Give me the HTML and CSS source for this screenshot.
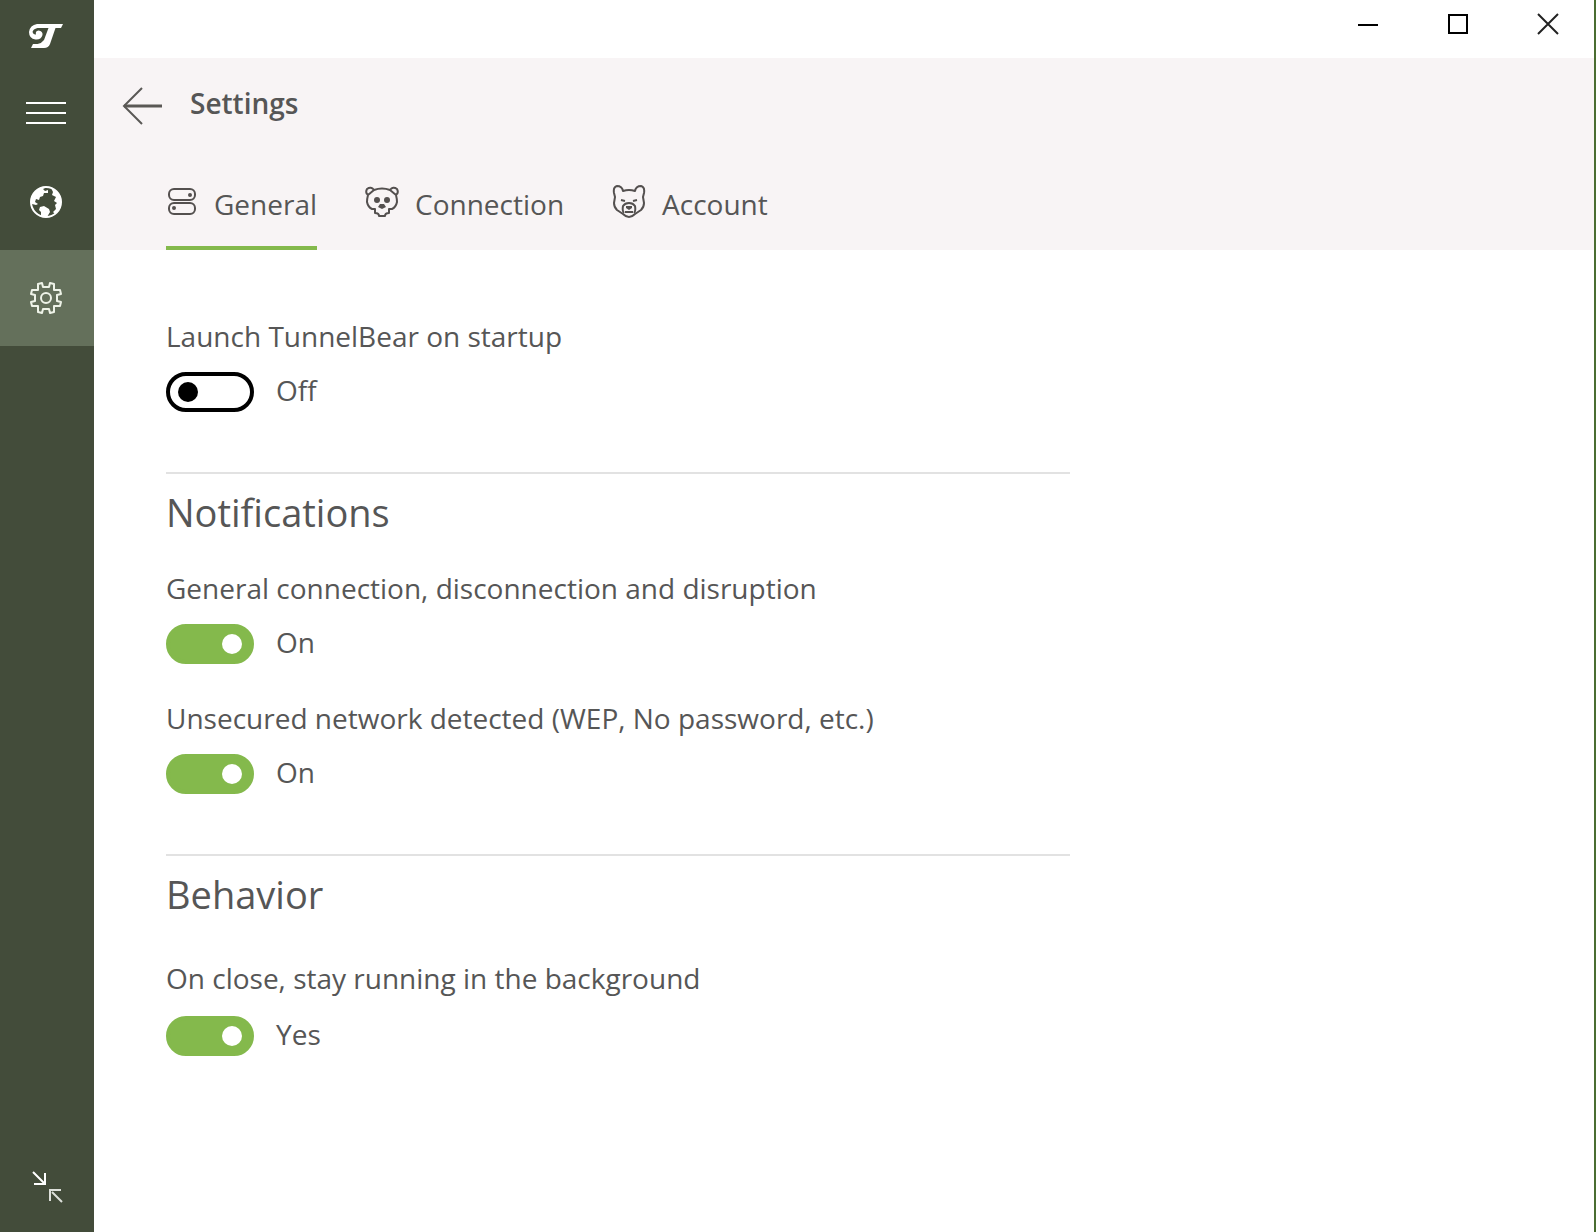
FILE: index.html
```html
<!DOCTYPE html>
<html lang="en">
<head>
<meta charset="utf-8">
<meta name="viewport" content="width=device-width, initial-scale=1">
<title>TunnelBear Settings</title>
<link rel="stylesheet" href="styles.css">
</head>
<body>
<div class="window">
  <nav class="sidebar" aria-label="Main">
    <div class="logo">
      <svg width="36" height="26" viewBox="0 0 36 26" aria-hidden="true">
        <path d="M9 1H35L33 5H27.500L22 21Q20.500 25 16 25H3L5 21H9.500Q14 20 16 17L20.500 5H9.500Q5 6 4.500 9Q5.500 12 8 11.500Q7 8 10.500 7.500Q15 8 14.500 12Q13 17 7.500 16.500Q1 15.500 1 9Q2 2 9 1Z" fill="#fff"/>
      </svg>
    </div>
    <button class="side-item side-menu" type="button" aria-label="Menu">
      <svg width="42" height="24" viewBox="0 0 42 24" aria-hidden="true"><path d="M1 2H41M1 12H41M1 22H41" stroke="#fff" stroke-width="2"/></svg>
    </button>
    <button class="side-item" type="button" aria-label="Map">
      <svg width="34" height="34" viewBox="0 0 34 34" aria-hidden="true">
        <circle cx="17" cy="17" r="15" fill="none" stroke="#fff" stroke-width="2"/>
        <g fill="#fff">
          <path d="M2 16Q3 8 9 4Q13 1 18 2L14 4L16 6L19 5V8L15 8L14 11L11 12L10 15L7 14L6 17L9 19L7 20L3 19Z"/>
          <path d="M11 22L15 21L20 24L21 27L18 32L12 31L12 27L10 25Z"/>
          <path d="M22 3Q32 7 32 17Q31 25 26 29L24 27L27 24L26 20L28 18L25 16L27 12L23 10L24 7Z"/>
        </g>
      </svg>
    </button>
    <button class="side-item side-active" type="button" aria-label="Settings" aria-current="page">
      <svg width="34" height="34" viewBox="0 0 34 34" fill="none" stroke="#eef3e8" stroke-width="2" stroke-linejoin="round" aria-hidden="true">
        <path d="M14 6L13 2L9 3V9H3L2 13L6 14V20L2 21L3 25H9V31L13 32L14 28H20L21 32L25 31V25H31L32 21L28 20V14L32 13L31 9H25V3L21 2L20 6Z"/>
        <circle cx="17" cy="17" r="5"/>
      </svg>
    </button>
    <button class="side-item side-collapse" type="button" aria-label="Compact view">
      <svg width="34" height="36" viewBox="0 0 34 36" fill="none" stroke-width="2" aria-hidden="true">
        <path d="M4 4L15 15M16 5V16H5" stroke="#fff"/><path d="M33 34L23 24M21 33V22H32" stroke="#dde0da"/>
      </svg>
    </button>
  </nav>

  <div class="panel">
    <div class="titlebar">
      <button class="window-button" type="button" aria-label="Minimize">
        <svg width="22" height="22" viewBox="0 0 22 22" aria-hidden="true"><path d="M1 12H21" stroke="#000" stroke-width="2"/></svg>
      </button>
      <button class="window-button" type="button" aria-label="Maximize">
        <svg width="22" height="22" viewBox="0 0 22 22" aria-hidden="true"><path d="M2 2H20V20H2Z" fill="none" stroke="#000" stroke-width="2"/></svg>
      </button>
      <button class="window-button" type="button" aria-label="Close">
        <svg width="22" height="22" viewBox="0 0 22 22" aria-hidden="true"><path d="M1 1L21 21M21 1L1 21" stroke="#222" stroke-width="2"/></svg>
      </button>
    </div>

    <header class="header">
      <div class="heading">
        <button class="back" type="button" aria-label="Back">
          <svg width="40" height="38" viewBox="0 0 40 38" fill="none" stroke="#5a5855" aria-hidden="true"><path d="M20 1L2 19L20 37" stroke-width="2"/><path d="M2 19H40" stroke-width="3"/></svg>
        </button>
        <h1 class="title">Settings</h1>
      </div>
      <div class="tabs" role="tablist">
        <button class="tab tab-selected" type="button" role="tab" aria-selected="true">
          <svg class="tab-icon" width="32" height="32" viewBox="0 0 32 32" fill="none" stroke="#54504f" stroke-width="2" aria-hidden="true">
            <rect x="3" y="3" width="26" height="11" rx="5"/><rect x="3" y="17" width="26" height="11" rx="5"/>
            <circle cx="24" cy="9" r="1"/><circle cx="8" cy="22" r="1"/>
          </svg>
          General
        </button>
        <button class="tab" type="button" role="tab" aria-selected="false">
          <svg class="tab-icon" width="34" height="32" viewBox="0 0 34 32" fill="none" stroke="#54504f" stroke-width="2" stroke-linejoin="round" aria-hidden="true">
            <path d="M9 4Q17 1 25 4Q28 0 32 3Q34 7 31 9Q32 13 32 16Q31 21 27 23H24V27Q20 27 20 30H14Q14 27 10 27V23H7Q3 21 2 16Q2 13 3 9Q0 7 2 3Q6 0 9 4ZM3 9L9 4M31 9L25 4"/>
            <g fill="#54504f" stroke="none"><circle cx="12" cy="14" r="3"/><circle cx="22" cy="14" r="3"/><path d="M15 18H19L21 21L17 23L13 21Z"/></g>
          </svg>
          Connection
        </button>
        <button class="tab" type="button" role="tab" aria-selected="false">
          <svg class="tab-icon" width="34" height="34" viewBox="0 0 34 34" fill="none" stroke="#54504f" stroke-width="2" stroke-linejoin="round" aria-hidden="true">
            <path d="M11 6Q17 4 23 6Q24 1 29 1Q33 2 32 8L31 12L32 18Q32 22 29 25L23 29Q20 32 17 32Q14 32 11 29L5 25Q2 22 2 18L3 12L2 8Q1 2 5 1Q10 1 11 6Z"/>
            <path d="M9 15L13 16M25 15L21 16M12 28Q10 26 11 21Q13 18 17 18Q21 18 23 21Q24 26 22 28M13 27H21"/>
            <path d="M14 21H20V23L17 25L14 23Z" fill="#54504f" stroke="none"/>
          </svg>
          Account
        </button>
      </div>
    </header>

    <main class="content">
      <section class="group">
        <div class="setting">
          <label class="setting-label" for="startup">Launch TunnelBear on startup</label>
          <div class="setting-row"><input class="toggle" id="startup" type="checkbox" role="switch"><span class="state">Off</span></div>
        </div>
      </section>
      <section class="group">
        <h2 class="group-title">Notifications</h2>
        <div class="setting">
          <label class="setting-label" for="connection">General connection, disconnection and disruption</label>
          <div class="setting-row"><input class="toggle" id="connection" type="checkbox" role="switch" checked><span class="state">On</span></div>
        </div>
        <div class="setting">
          <label class="setting-label" for="unsecured">Unsecured network detected (WEP, No password, etc.)</label>
          <div class="setting-row"><input class="toggle" id="unsecured" type="checkbox" role="switch" checked><span class="state">On</span></div>
        </div>
      </section>
      <section class="group group-behavior">
        <h2 class="group-title">Behavior</h2>
        <div class="setting">
          <label class="setting-label" for="background">On close, stay running in the background</label>
          <div class="setting-row"><input class="toggle" id="background" type="checkbox" role="switch" checked><span class="state">Yes</span></div>
        </div>
      </section>
    </main>
  </div>
</div>
</body>
</html>
```
FILE: styles.css
```css
* { box-sizing: border-box; }

body {
  margin: 0;
  font-family: "Open Sans", "Noto Sans", sans-serif;
  font-size: 28px;
  line-height: 40px;
  color: #565656;
  background: #fff;
}

button {
  margin: 0;
  padding: 0;
  border: 0;
  background: none;
  color: inherit;
  font: inherit;
}

svg { display: block; flex: none; }

.window {
  display: flex;
  min-height: 100vh;
  border-right: 2px solid #4a6d31;
}

/* Sidebar */
.sidebar {
  display: flex;
  flex-direction: column;
  flex: none;
  width: 94px;
  background: #434c3a;
}

.logo,
.side-item {
  display: flex;
  align-items: center;
  justify-content: center;
  padding-right: 2px;
}

.logo { height: 72px; }
.side-item { height: 96px; }
.side-menu { height: 82px; }
.side-active { background: #64705b; }
.side-collapse { margin-top: auto; height: 92px; }

/* Window bar */
.panel {
  flex: 1;
  min-width: 0;
}

.titlebar {
  display: flex;
  justify-content: flex-end;
  height: 58px;
  padding-right: 1px;
}

.window-button {
  display: flex;
  align-items: center;
  justify-content: center;
  width: 90px;
  height: 48px;
}

/* Header */
.header {
  display: flex;
  flex-direction: column;
  justify-content: space-between;
  height: 192px;
  padding: 25px 28px 0;
  background: #f8f4f5;
}

.heading {
  display: flex;
  gap: 28px;
}

.back { padding-top: 4px; }

.title {
  margin: 0;
  font-size: 28px;
  font-weight: 600;
}

.tabs {
  display: flex;
  gap: 48px;
  padding-left: 44px;
}

.tab {
  display: flex;
  align-items: center;
  gap: 16px;
  padding-bottom: 22px;
  border-bottom: 4px solid transparent;
}

.tab-icon { margin-bottom: 4px; }

.tab-selected { border-color: #84b94c; }

/* Settings */
.content { padding: 66px 72px; }

.group { max-width: 904px; }

.group + .group {
  margin-top: 60px;
  padding-top: 12px;
  border-top: 2px solid #e2e2e2;
}

.group-title {
  margin: 0 0 30px;
  font-size: 38px;
  font-weight: 400;
  line-height: 52px;
}

.setting + .setting { margin-top: 34px; }

.setting-label {
  display: block;
  margin-bottom: 16px;
}

.group-behavior .group-title { margin-bottom: 38px; }
.group-behavior .setting-label { margin-bottom: 18px; }

.setting-row {
  display: flex;
  gap: 22px;
}

.state { line-height: 36px; }

.toggle {
  appearance: none;
  display: flex;
  align-items: center;
  width: 88px;
  height: 40px;
  margin: 0;
  padding: 0 8px;
  border: 4px solid #000;
  border-radius: 20px;
}

.toggle::before {
  content: "";
  width: 20px;
  height: 20px;
  border-radius: 50%;
  background: #000;
}

.toggle:checked {
  justify-content: flex-end;
  border-color: #84b94c;
  background: #84b94c;
}

.toggle:checked::before { background: #fff; }
```
